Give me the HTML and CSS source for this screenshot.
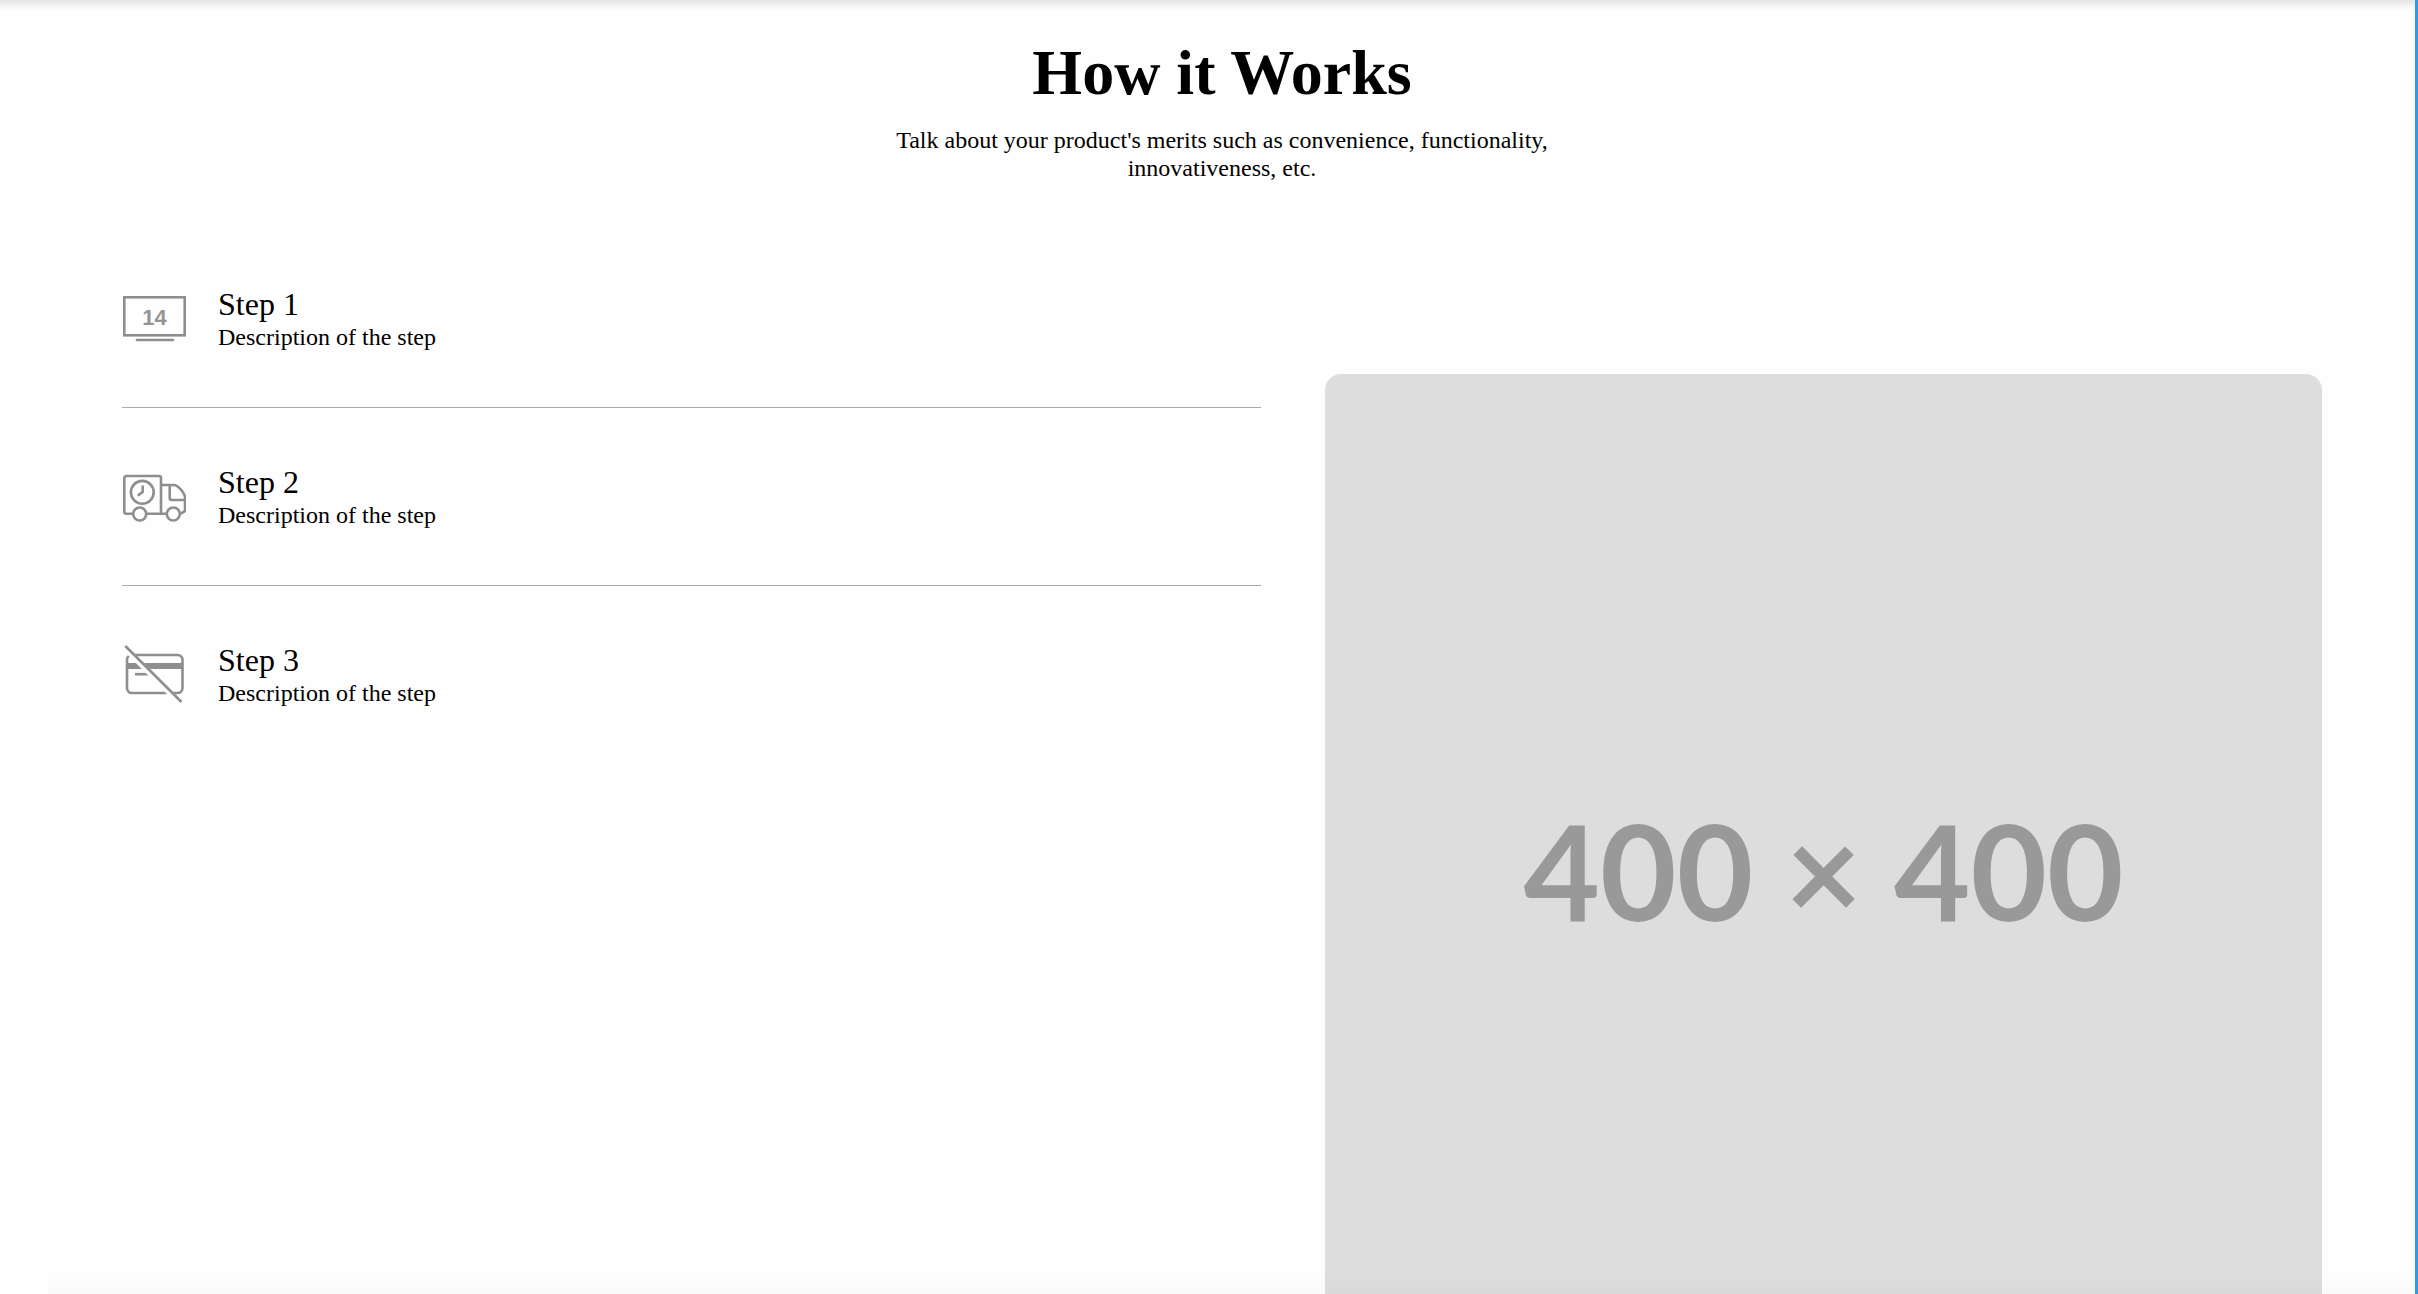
FILE: index.html
```html
<!DOCTYPE html>
<html lang="en">
<head>
<meta charset="utf-8">
<meta name="viewport" content="width=device-width, initial-scale=1">
<title>How it Works</title>
<link rel="stylesheet" href="styles.css">
</head>
<body>
<main class="section">
  <header class="intro">
    <h1 class="title">How it Works</h1>
    <p class="lead">Talk about your product's merits such as convenience, functionality, innovativeness, etc.</p>
  </header>
  <div class="content">
    <ol class="steps">
      <li class="step">
        <svg class="icon" viewBox="0 0 64 64" stroke-width="2.6" aria-hidden="true">
          <rect x="2.300" y="10.300" width="60.400" height="38"/>
          <path d="M15 53H51" stroke-linecap="round"/>
          <text class="icon-text" x="32.500" y="37.500">14</text>
        </svg>
        <div>
          <h2 class="step-title">Step 1</h2>
          <p class="step-text">Description of the step</p>
        </div>
      </li>
      <li class="step">
        <svg class="icon" viewBox="0 0 64 64" stroke-width="2.6" aria-hidden="true">
          <path d="M11 48.700H4.300a2 2 0 0 1-2-2V13a2 2 0 0 1 2-2H37a2 2 0 0 1 2 2V48.700M24.400 48.700H44.600M39 20H51.500C56.500 20 63 29 63 32.500V46L58.700 48.700M47.700 20V33a2 2 0 0 0 2 2H63"/>
          <circle cx="17.700" cy="49" r="6.500"/>
          <circle cx="51.300" cy="49" r="6.500"/>
          <circle cx="20.300" cy="27.300" r="11.400"/>
          <path d="M20.700 20.500V26.800L15.700 30.700"/>
        </svg>
        <div>
          <h2 class="step-title">Step 2</h2>
          <p class="step-text">Description of the step</p>
        </div>
      </li>
      <li class="step">
        <svg class="icon" viewBox="0 0 64 64" stroke-width="2.6" aria-hidden="true">
          <rect x="5" y="12" width="55.500" height="38" rx="5"/>
          <path d="M5 23H60.500" stroke-width="6"/>
          <path d="M13 31.200H28"/>
          <path class="icon-gap" d="M1.500 3.500L58 60" stroke-width="6"/>
          <path d="M3.300 3L59.500 59"/>
        </svg>
        <div>
          <h2 class="step-title">Step 3</h2>
          <p class="step-text">Description of the step</p>
        </div>
      </li>
    </ol>
    <div class="picture">400 × 400</div>
  </div>
</main>
</body>
</html>
```
FILE: styles.css
```css
* {
  box-sizing: border-box;
}

body {
  height: 100vh;
  margin: 0;
  overflow: hidden;
  border-right: 3px solid #3498e2;
  background: #fefefe;
  color: #000;
  font-family: "Liberation Serif", "Times New Roman", serif;
  font-size: 24px;
  line-height: 28px;
}

/* Shadows cast by the neighbouring sections */
body::before,
body::after {
  content: "";
  position: fixed;
  left: 0;
  right: 3px;
  pointer-events: none;
}

body::before {
  top: 0;
  height: 10px;
  background: linear-gradient(rgba(0, 0, 0, 0.1), rgba(0, 0, 0, 0));
}

body::after {
  bottom: 0;
  left: 48px;
  height: 24px;
  background: linear-gradient(rgba(0, 0, 0, 0), rgba(0, 0, 0, 0.015));
}

.section {
  padding: 37px 93px 64px 122px;
}

.intro {
  text-align: center;
}

.title {
  margin: 0 0 17px;
  font-size: 64px;
  line-height: 72px;
}

.lead {
  max-width: 720px;
  margin: 0 auto;
}

.content {
  display: grid;
  grid-template-columns: 8fr 7fr;
  gap: 64px;
  align-items: start;
  margin-top: 48px;
}

.steps {
  margin: 0;
  padding: 0;
  list-style: none;
}

.step {
  display: flex;
  align-items: center;
  gap: 32px;
  padding: 56px 0;
}

.step + .step {
  border-top: 1px solid #aaa;
}

.step-title {
  margin: 0;
  font-size: 32px;
  font-weight: 400;
  line-height: 37px;
}

.step-text {
  margin: 0;
}

.icon {
  flex: none;
  width: 64px;
  height: 64px;
  fill: none;
  stroke: #8e8e8e;
}

.icon-gap {
  stroke: #fefefe;
}

.icon-text {
  fill: #949494;
  stroke: none;
  font-family: "Liberation Sans", Arial, sans-serif;
  font-size: 22px;
  font-weight: 700;
  text-anchor: middle;
}

.picture {
  display: flex;
  align-items: center;
  justify-content: center;
  aspect-ratio: 1;
  margin-top: 144px;
  padding-bottom: 4px;
  border-radius: 16px;
  background: #ddd;
  color: #999;
  font-family: Lato, sans-serif;
  font-size: 132px;
  font-weight: 700;
  line-height: 160px;
}
```
